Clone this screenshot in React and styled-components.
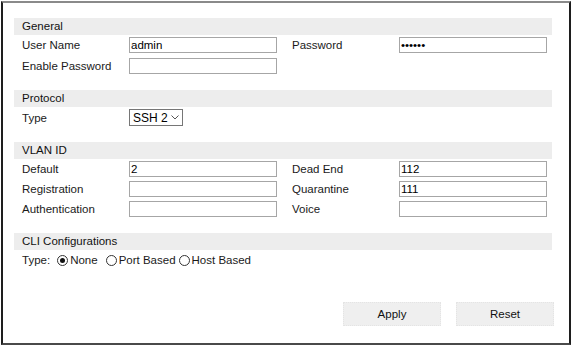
import styled, { createGlobalStyle } from "styled-components";

const GlobalStyle = createGlobalStyle`
  body {
    margin: 0;
    background: #fff;
    font-family: "Liberation Sans", Arial, sans-serif;
  }
`;

const Frame = styled.div`
  box-sizing: border-box;
  margin: 1px 0 0 1px;
  width: 570px;
  height: 344px;
  border: 2px solid #1e1e1e;
  border-top-color: #8a8a8a;
  border-bottom-color: #4a4a4a;
  padding: 15px 17px 17px 11px;
  display: flex;
  flex-direction: column;
  font-size: 11.5px;
  color: #1a1a1a;
`;

const Section = styled.div`
  margin-bottom: 16px;
`;

const Band = styled.div`
  height: 17px;
  line-height: 17px;
  background: #ededed;
  padding-left: 8px;
  margin-bottom: 2px;
  color: #111;
`;

const Rows = styled.div`
  display: flex;
  flex-direction: column;
  gap: ${(p) => p.$gap || 5}px;
`;

const Row = styled.div`
  display: flex;
  align-items: center;
  gap: 15px;
  height: ${(p) => p.$height || 16}px;
  padding-left: 8px;
`;

const Pair = styled.div`
  display: flex;
  align-items: center;
`;

const Label = styled.span`
  width: 107px;
`;

const TextInput = styled.input`
  box-sizing: border-box;
  width: 148px;
  height: 16px;
  margin: 0;
  border: 1px solid #a6a6a6;
  padding: 0 1px;
  font-family: inherit;
  font-size: 11.5px;
  color: #000;
  background: #fff;
  outline: none;
`;

const SelectBox = styled.div`
  box-sizing: border-box;
  width: 54px;
  height: 17px;
  border: 1px solid #767676;
  display: flex;
  align-items: center;
  padding-left: 3px;
  gap: 3px;
  color: #000;
  font-size: 12px;
`;

const Options = styled.div`
  display: flex;
  align-items: center;
`;

const Option = styled.label`
  display: flex;
  align-items: center;
  margin-left: ${(p) => p.$offset}px;
`;

const Dot = styled.span`
  box-sizing: border-box;
  width: 11px;
  height: 11px;
  border-radius: 50%;
  border: 1px solid #333;
  margin-right: 2px;
  display: flex;
  align-items: center;
  justify-content: center;

  &::after {
    content: "";
    width: 5px;
    height: 5px;
    border-radius: 50%;
    background: ${(p) => (p.$checked ? "#111" : "transparent")};
  }
`;

const Footer = styled.div`
  margin-top: auto;
  margin-right: -2px;
  display: flex;
  justify-content: flex-end;
  gap: 15px;
`;

const Button = styled.button`
  box-sizing: border-box;
  width: 98px;
  height: 24px;
  background: #efefef;
  border: 1px dotted #e4e4e4;
  font-family: inherit;
  font-size: 11.5px;
  color: #111;
  padding: 0;
`;

function Field({ label, value = "" }) {
  return (
    <Pair>
      <Label>{label}</Label>
      <TextInput readOnly value={value} />
    </Pair>
  );
}

export default function App() {
  return (
    <>
      <GlobalStyle />
      <Frame>
        <Section>
          <Band>General</Band>
          <Rows>
            <Row>
              <Field label="User Name" value="admin" />
              <Field label="Password" value="••••••" />
            </Row>
            <Row>
              <Field label="Enable Password" />
            </Row>
          </Rows>
        </Section>

        <Section>
          <Band>Protocol</Band>
          <Row $height={17}>
            <Pair>
              <Label>Type</Label>
              <SelectBox>
                <span>SSH 2</span>
                <svg width="8" height="5" viewBox="0 0 8 5">
                  <path d="M0.5 0.5 L4 4 L7.5 0.5" fill="none" stroke="#555" strokeWidth="1" />
                </svg>
              </SelectBox>
            </Pair>
          </Row>
        </Section>

        <Section>
          <Band>VLAN ID</Band>
          <Rows $gap={4}>
            <Row>
              <Field label="Default" value="2" />
              <Field label="Dead End" value="112" />
            </Row>
            <Row>
              <Field label="Registration" />
              <Field label="Quarantine" value="111" />
            </Row>
            <Row>
              <Field label="Authentication" />
              <Field label="Voice" />
            </Row>
          </Rows>
        </Section>

        <Section>
          <Band>CLI Configurations</Band>
          <Row>
            <Options>
              <span>Type:</span>
              <Option $offset={7}>
                <Dot $checked />
                None
              </Option>
              <Option $offset={8}>
                <Dot />
                Port Based
              </Option>
              <Option $offset={3}>
                <Dot />
                Host Based
              </Option>
            </Options>
          </Row>
        </Section>

        <Footer>
          <Button>Apply</Button>
          <Button>Reset</Button>
        </Footer>
      </Frame>
    </>
  );
}
